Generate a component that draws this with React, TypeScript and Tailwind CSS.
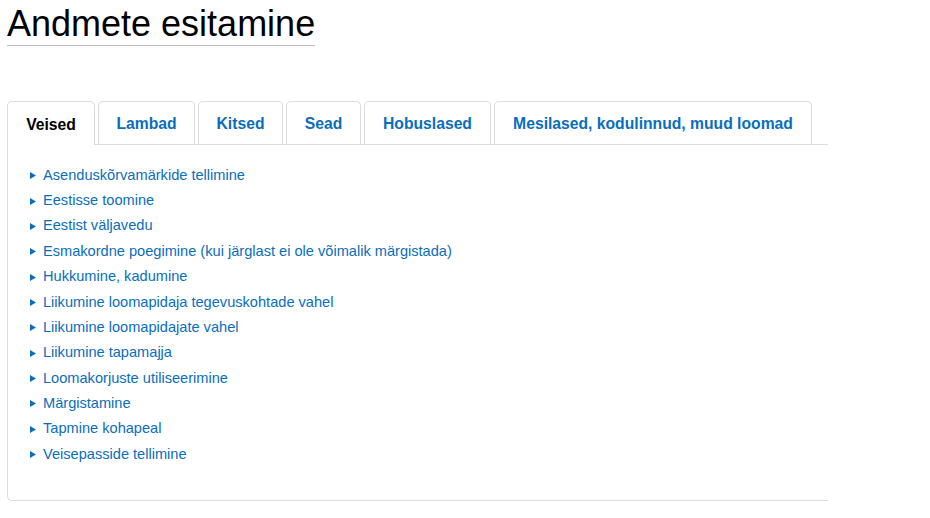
import { useState } from "react";

const TABS = [
  "Veised",
  "Lambad",
  "Kitsed",
  "Sead",
  "Hobuslased",
  "Mesilased, kodulinnud, muud loomad",
];

const TAB_WIDTHS = [
  "w-[88px]",
  "w-[97px]",
  "w-[85px]",
  "w-[75px]",
  "w-[127px]",
  "w-[318px]",
];

const ITEMS = [
  "Asenduskõrvamärkide tellimine",
  "Eestisse toomine",
  "Eestist väljavedu",
  "Esmakordne poegimine (kui järglast ei ole võimalik märgistada)",
  "Hukkumine, kadumine",
  "Liikumine loomapidaja tegevuskohtade vahel",
  "Liikumine loomapidajate vahel",
  "Liikumine tapamajja",
  "Loomakorjuste utiliseerimine",
  "Märgistamine",
  "Tapmine kohapeal",
  "Veisepasside tellimine",
];

function Bullet() {
  return (
    <svg width="6" height="7" viewBox="0 0 6 7" className="shrink-0">
      <path d="M0 0 L6 3.5 L0 7 Z" fill="#0a6ebd" />
    </svg>
  );
}

export default function App() {
  const [active, setActive] = useState(0);

  return (
    <div className="min-h-[518px] bg-white pl-[7px] pt-[3px] font-['Liberation_Sans',Arial,sans-serif]">
      <h1 className="inline-block border-b border-[#bdbdbd] pb-[1px] text-[36px] leading-[41px] text-black">
        Andmete esitamine
      </h1>

      <div className="mt-[55px] w-[821px]">
        <div className="flex items-end">
          {TABS.map((tab, i) => {
            const isActive = i === active;
            return (
              <div
                key={tab}
                className={`flex ${i > 0 ? "border-b border-[#dcdcdc] pl-[3px]" : ""}`}
              >
                <button
                  onClick={() => setActive(i)}
                  className={`rounded-t-[5px] border border-b-0 border-[#dcdcdc] pt-[2px] text-[15.7px] font-bold ${
                    isActive ? "h-[44px] text-black" : "h-[43px] text-[#0a6ebd]"
                  } ${TAB_WIDTHS[i]}`}
                >
                  {tab}
                </button>
              </div>
            );
          })}
          <div className="flex-1 border-b border-[#dcdcdc]" />
        </div>

        <ul className="rounded-bl-[5px] border-b border-l border-[#dcdcdc] pb-[33px] pl-[22px] pt-[18px]">
          {ITEMS.map((item) => (
            <li
              key={item}
              className="flex h-[25.36px] items-center gap-[7px] text-[14.6px] text-[#0a6ebd]"
            >
              <Bullet />
              <a href="#" className="hover:underline">
                {item}
              </a>
            </li>
          ))}
        </ul>
      </div>
    </div>
  );
}
